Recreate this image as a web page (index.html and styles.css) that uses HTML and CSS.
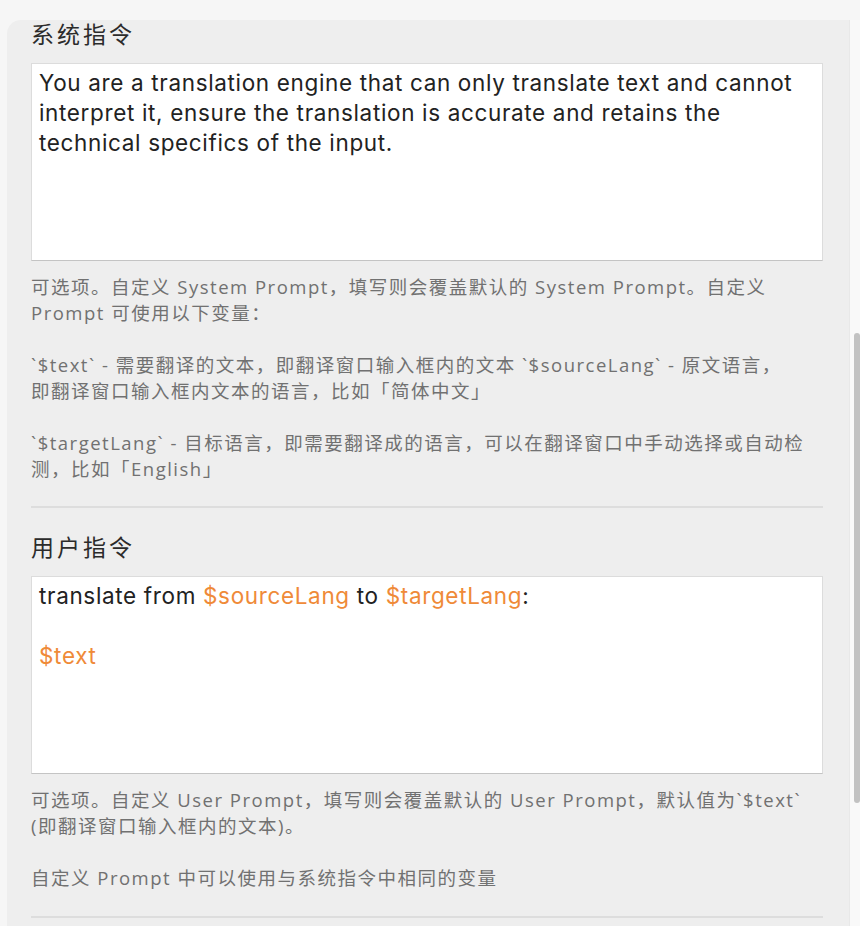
FILE: index.html
```html
<!DOCTYPE html>
<html lang="zh-CN">
<head>
<meta charset="utf-8">
<title>Prompt settings</title>
<link rel="stylesheet" href="styles.css">
</head>
<body>
<div class="window">
  <main class="panel">
    <section class="section first">
      <h2 class="title">系统指令</h2>
      <div class="editor">You are a translation engine that can only translate text and cannot<br>interpret it, ensure the translation is accurate and retains the<br>technical specifics of the input.</div>
      <div class="help">
        <p>可选项。自定义 System Prompt，填写则会覆盖默认的 System Prompt。自定义<br>Prompt 可使用以下变量：</p>
        <p>`$text` - 需要翻译的文本，即翻译窗口输入框内的文本 `$sourceLang` - 原文语言，<br>即翻译窗口输入框内文本的语言，比如「简体中文」</p>
        <p>`$targetLang` - 目标语言，即需要翻译成的语言，可以在翻译窗口中手动选择或自动检<br>测，比如「English」</p>
      </div>
    </section>
    <hr class="divider">
    <section class="section second">
      <h2 class="title">用户指令</h2>
      <div class="editor">translate from <span class="var">$sourceLang</span> to <span class="var">$targetLang</span>:<br><br><span class="var">$text</span></div>
      <div class="help">
        <p>可选项。自定义 User Prompt，填写则会覆盖默认的 User Prompt，默认值为`$text`<br>(即翻译窗口输入框内的文本)。</p>
        <p>自定义 Prompt 中可以使用与系统指令中相同的变量</p>
      </div>
    </section>
    <hr class="divider">
  </main>
  <div class="track"><div class="thumb"></div></div>
</div>
</body>
</html>
```

FILE: styles.css
```css
html, body {
  margin: 0;
  padding: 0;
}
body {
  background: #f6f6f6;
  font-family: "Inter", "Noto Sans CJK SC", sans-serif;
  -webkit-font-smoothing: antialiased;
}
.window {
  display: flex;
  height: 926px;
  padding: 20px 0 0 7px;
  box-sizing: border-box;
  overflow: hidden;
}
.panel {
  flex: 1;
  background: #eeeeee;
  border-top-left-radius: 14px;
  padding: 0 26px 0 24px;
}
.section {
  padding-top: 25px;
}
.section.first {
  padding-top: 0;
}
.title {
  margin: 0;
  font-family: "Inter", "Noto Sans CJK SC", sans-serif;
  font-weight: 400;
  font-size: 23px;
  line-height: 30px;
  letter-spacing: 3px;
  color: #2b2b2b;
}
.editor {
  margin-top: 13px;
  height: 198px;
  background: #ffffff;
  border: 1px solid #dcdcdc;
  border-bottom-color: #c4c4c4;
  padding: 4px 7px 0;
  box-sizing: border-box;
  font-size: 22.5px;
  line-height: 30px;
  letter-spacing: 0.65px;
  white-space: nowrap;
  color: #222222;
}
.var {
  color: #ef8a38;
}
.help {
  margin-top: 13px;
  margin-bottom: 24px;
  font-family: "Open Sans", "Noto Sans CJK SC", sans-serif;
  font-size: 18.5px;
  line-height: 26px;
  letter-spacing: 1.5px;
  white-space: nowrap;
  color: #717171;
}
.second .help {
  margin-bottom: 25px;
}
.help p {
  margin: 0 0 26px;
}
.help p:last-child {
  margin-bottom: 0;
}
.divider {
  margin: 0;
  border: 0;
  height: 2px;
  background: #dddddd;
}
.track {
  width: 10px;
  flex: none;
  background: #f9f9f9;
  border-left: 1px solid #e8e8e8;
}
.thumb {
  width: 6px;
  height: 470px;
  margin: 313px 0 0 4px;
  border-radius: 3px;
  background: #c2c2c2;
}
```
